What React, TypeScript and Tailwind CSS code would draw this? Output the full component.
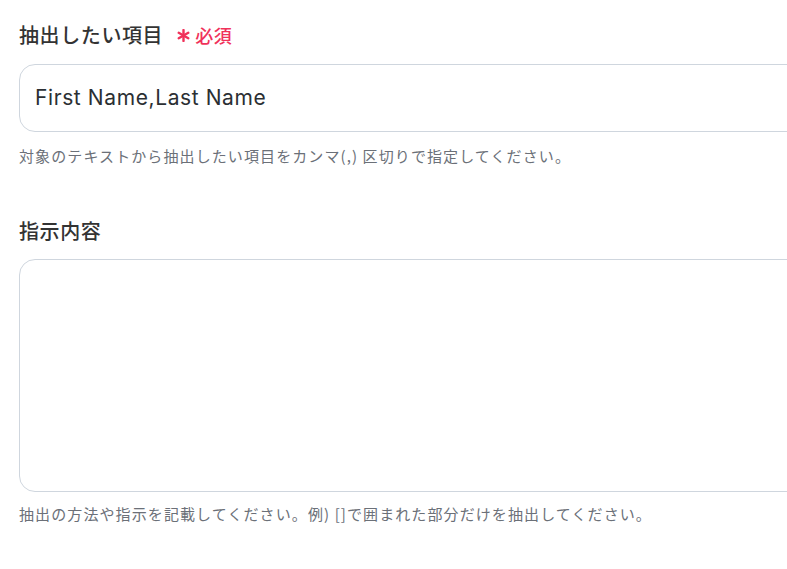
export default function App() {
  return (
    <div
      className="w-[787px] h-[569px] overflow-hidden bg-white"
      style={{ fontFamily: '"Noto Sans CJK JP", "Noto Sans", sans-serif' }}
    >
      <div className="w-[840px] pl-[19px] pt-[21px]">
        <div className="flex items-center h-[28px]">
          <span className="text-[20px] leading-[28px] font-medium tracking-[0.6px] text-[#333333]">
            抽出したい項目
          </span>
          <svg className="ml-[14px] mt-[1px]" width="13" height="13" viewBox="0 0 13 13">
            <g stroke="#f0325a" strokeWidth="2.4" strokeLinecap="round">
              <line x1="6.5" y1="1" x2="6.5" y2="12" />
              <line x1="1.7" y1="3.75" x2="11.3" y2="9.25" />
              <line x1="1.7" y1="9.25" x2="11.3" y2="3.75" />
            </g>
          </svg>
          <span className="ml-[5px] text-[18px] leading-[28px] font-medium tracking-[0.5px] text-[#f0325a]">必須</span>
        </div>
        <div className="mt-[15px] h-[68px] rounded-[16px] border border-[#cfd6de] flex items-center pl-[15px]">
          <span
            className="text-[21px] text-[#2b2f33] tracking-[0.6px]"
            style={{ fontFamily: 'Inter, "Noto Sans", sans-serif' }}
          >
            First Name,Last Name
          </span>
        </div>
        <p className="mt-[14px] text-[15px] leading-[20px] tracking-[1.1px] text-[#6b7078]">
          対象のテキストから抽出したい項目をカンマ(,) 区切りで指定してください。
        </p>

        <div className="mt-[51px] flex items-center h-[28px]">
          <span className="text-[20px] leading-[28px] font-medium tracking-[0.6px] text-[#333333]">指示内容</span>
        </div>
        <div className="mt-[14px] h-[233px] rounded-[16px] border border-[#cfd6de]" />
        <p className="mt-[12px] text-[15px] leading-[20px] tracking-[1.1px] text-[#6b7078]">
          抽出の方法や指示を記載してください。例) []で囲まれた部分だけを抽出してください。
        </p>
      </div>
    </div>
  );
}
